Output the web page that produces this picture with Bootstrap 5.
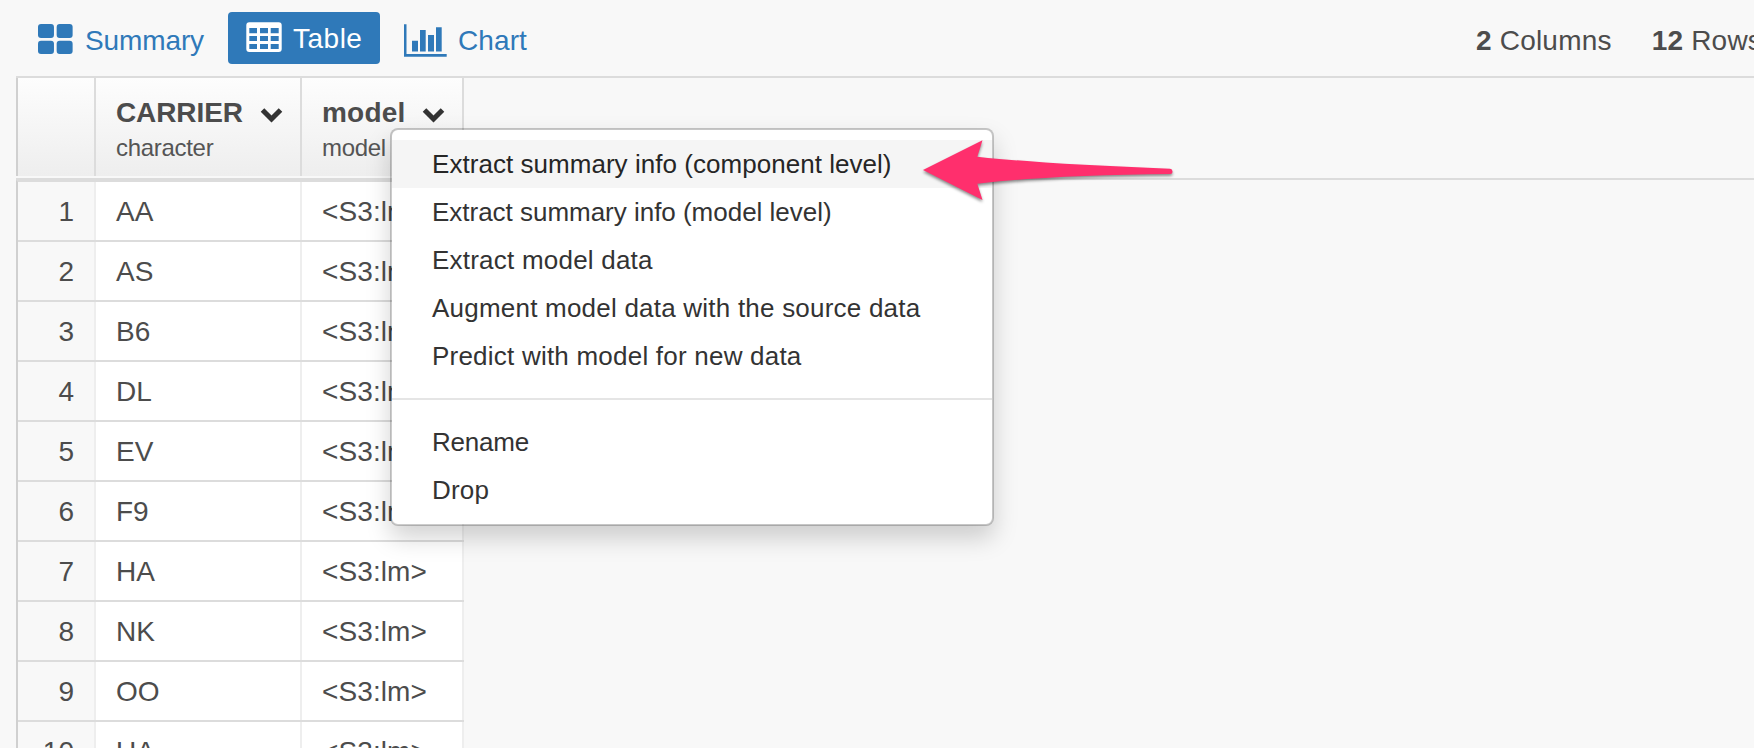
<!DOCTYPE html>
<html lang="en">
<head>
<meta charset="utf-8">
<title>Data table</title>
<link rel="stylesheet" href="https://cdn.jsdelivr.net/npm/bootstrap@5.3.0/dist/css/bootstrap.min.css">
<style>
body{background:#f8f8f8;color:#4c4c4c;font-family:"Liberation Sans",Arial,sans-serif;font-size:28px;line-height:32px;height:748px;overflow:hidden}
.topbar{height:76px;white-space:nowrap}
.view-tab{color:#2f79b9;text-decoration:none;height:52px;margin-top:12px}
.tab-summary{padding:5px 0 0 38px;letter-spacing:-.1px;width:204px}
.tab-table{background:#2f79b9;color:#fff;border-radius:4px;width:152px;padding-left:18px;margin-left:24px}
.tab-table span{padding-top:11px;letter-spacing:.5px}
.tab-chart{padding:5px 0 0 24px;letter-spacing:.1px}
.stats{padding-top:25px;letter-spacing:.2px;width:278px;overflow:hidden}
.stat-rows{margin-left:40px}
.grid-area{margin-left:16px;border-top:2px solid #dcdcdc}
.head-strip{height:98px;width:448px;border-left:2px solid #d0d0d0;background:linear-gradient(#fdfdfd,#eee)}
.head-wrap{border-bottom:2px solid #dcdcdc;height:102px}
.c-num{width:78px;border-right:2px solid #dcdcdc}
.c-car{width:206px;border-right:2px solid #dcdcdc;padding-left:20px}
.c-mod{width:162px;border-right:2px solid #dcdcdc;padding-left:20px}
.col-name{font-weight:700;padding-top:19px;height:51px;padding-right:17px;letter-spacing:-.1px}
.c-mod .col-name{letter-spacing:.2px}
.col-name svg{margin-top:-1px}
.col-type{font-size:24px;line-height:28px;padding-top:5px;color:#555;letter-spacing:-.3px}
.body-rows{width:448px;border-left:2px solid #d0d0d0;border-top:2px solid #dcdcdc}
.data-row{height:60px;border-bottom:2px solid #dcdcdc;background:#fff;line-height:60px}
.data-row>div{border-right-color:#eee;height:58px}
.data-row .c-num{background:#f8f8f8;text-align:right;padding-right:20px}
.data-row .c-mod{letter-spacing:.1px}
.col-menu{left:390px;top:128px;width:604px;height:398px;padding:10px 0;border:2px solid rgba(0,0,0,.2);border-radius:8px;box-shadow:0 12px 24px rgba(0,0,0,.175);background:#fff;background-clip:padding-box;font-size:26px;display:block}
.col-menu .dropdown-item{padding:0 0 0 40px;height:48px;line-height:48px;color:#333;letter-spacing:.22px}
.col-menu .dropdown-item.snug{letter-spacing:-.02px}
.col-menu .dropdown-item.tight{letter-spacing:-.2px}
.col-menu .dropdown-item.hovered{background:#f5f5f5;color:#262626;letter-spacing:.04px}
.col-menu .dropdown-divider{border-top:2px solid #e5e5e5;margin:18px 0;opacity:1}
.pointer{left:915px;top:130px;z-index:1100;filter:drop-shadow(0 2px 1.5px rgba(0,0,0,.45))}
</style>
</head>
<body>
<nav class="topbar d-flex">
  <a class="view-tab tab-summary d-flex" href="#"><svg width="47" height="42" viewBox="0 0 47 42" fill="#2f79b9"><rect y="7" width="16" height="14" rx="3"/><rect x="18.7" y="7" width="16" height="14" rx="3"/><rect y="23.8" width="16" height="13.2" rx="3"/><rect x="18.7" y="23.8" width="16" height="13.2" rx="3"/></svg><span class="pt-2">Summary</span></a>
  <a class="view-tab tab-table d-flex" href="#"><svg width="47" height="52" viewBox="0 0 47 52"><path fill="#fff" fill-rule="evenodd" d="M3.3 10.3H32.700a3 3 0 0 1 3 3V37a3 3 0 0 1-3 3H3.300a3 3 0 0 1-3-3V13.300a3 3 0 0 1 3-3ZM3.300 16V21.300H11V16ZM14 16V21.300H22V16ZM24.700 16V21.300H32.700V16ZM3.300 24V29H11V24ZM14 24V29H22V24ZM24.700 24V29H32.700V24ZM3.300 32V37H11V32ZM14 32V37H22V32ZM24.700 32V37H32.700V32Z"/></svg><span>Table</span></a>
  <a class="view-tab tab-chart d-flex" href="#"><svg width="54" height="42" viewBox="0 0 54 42" fill="#2f79b9"><path d="M0 7.300H2.500V37H42.700V39.700H0ZM8 23.700H14V34.400H8ZM16 13H21.700V34.400H16ZM24 18H30V34.400H24ZM32 10.300H37.700V34.400H32Z"/></svg><span class="pt-2">Chart</span></a>
  <div class="stats d-flex ms-auto"><div><b>2</b> Columns</div><div class="stat-rows"><b>12</b> Rows</div></div>
</nav>
<main class="grid-area">
  <div class="head-wrap">
    <div class="head-strip d-flex">
      <div class="c-num"></div>
      <div class="c-car"><div class="col-name d-flex justify-content-between">CARRIER<svg width="23" height="32" viewBox="0 0 23 32"><path d="M2.500 14 11.500 23 20.500 14" fill="none" stroke="#333" stroke-width="5"/></svg></div><div class="col-type">character</div></div>
      <div class="c-mod"><div class="col-name d-flex justify-content-between">model<svg width="23" height="32" viewBox="0 0 23 32"><path d="M2.500 14 11.500 23 20.500 14" fill="none" stroke="#333" stroke-width="5"/></svg></div><div class="col-type">model</div></div>
    </div>
  </div>
  <div class="body-rows">
    <div class="data-row d-flex"><div class="c-num">1</div><div class="c-car">AA</div><div class="c-mod">&lt;S3:lm&gt;</div></div>
    <div class="data-row d-flex"><div class="c-num">2</div><div class="c-car">AS</div><div class="c-mod">&lt;S3:lm&gt;</div></div>
    <div class="data-row d-flex"><div class="c-num">3</div><div class="c-car">B6</div><div class="c-mod">&lt;S3:lm&gt;</div></div>
    <div class="data-row d-flex"><div class="c-num">4</div><div class="c-car">DL</div><div class="c-mod">&lt;S3:lm&gt;</div></div>
    <div class="data-row d-flex"><div class="c-num">5</div><div class="c-car">EV</div><div class="c-mod">&lt;S3:lm&gt;</div></div>
    <div class="data-row d-flex"><div class="c-num">6</div><div class="c-car">F9</div><div class="c-mod">&lt;S3:lm&gt;</div></div>
    <div class="data-row d-flex"><div class="c-num">7</div><div class="c-car">HA</div><div class="c-mod">&lt;S3:lm&gt;</div></div>
    <div class="data-row d-flex"><div class="c-num">8</div><div class="c-car">NK</div><div class="c-mod">&lt;S3:lm&gt;</div></div>
    <div class="data-row d-flex"><div class="c-num">9</div><div class="c-car">OO</div><div class="c-mod">&lt;S3:lm&gt;</div></div>
    <div class="data-row d-flex"><div class="c-num">10</div><div class="c-car">UA</div><div class="c-mod">&lt;S3:lm&gt;</div></div>
  </div>
</main>
<div class="dropdown-menu col-menu show position-absolute">
  <a class="dropdown-item hovered" href="#">Extract summary info (component level)</a>
  <a class="dropdown-item snug" href="#">Extract summary info (model level)</a>
  <a class="dropdown-item" href="#">Extract model data</a>
  <a class="dropdown-item" href="#">Augment model data with the source data</a>
  <a class="dropdown-item" href="#">Predict with model for new data</a>
  <hr class="dropdown-divider">
  <a class="dropdown-item tight" href="#">Rename</a>
  <a class="dropdown-item" href="#">Drop</a>
</div>
<svg class="pointer position-absolute" width="265" height="80" viewBox="0 0 265 80"><path fill="#ff2f6d" d="M8 40 67.500 10.300 62.300 26.700C110 32 180 36 255 38.700Q257.500 39 257.500 41.500T255 44C180 44.500 110 48 62.300 53.700L67.500 70Z"/></svg>
<script src="https://cdn.jsdelivr.net/npm/bootstrap@5.3.0/dist/js/bootstrap.bundle.min.js"></script>
</body>
</html>
